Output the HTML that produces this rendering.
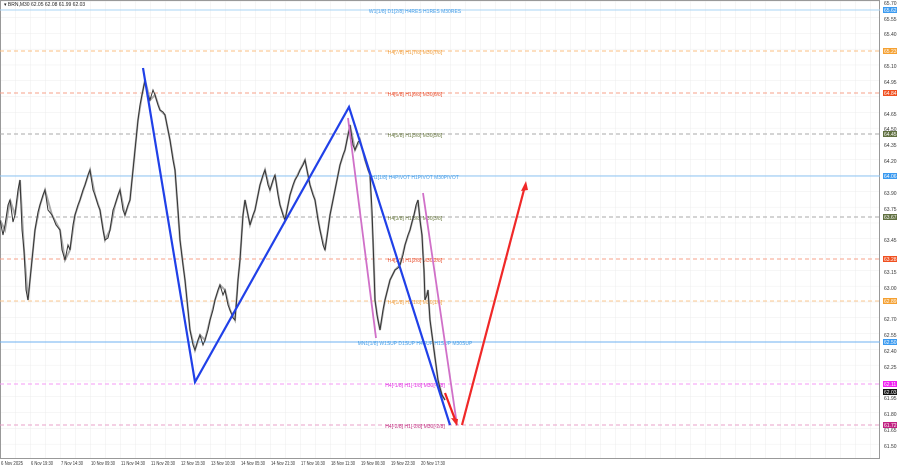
<!DOCTYPE html><html><head><style>
body{margin:0;width:900px;height:468px;background:#fff;overflow:hidden;font-family:"Liberation Sans",sans-serif}
svg{display:block}
</style></head><body>
<svg width="900" height="468" viewBox="0 0 900 468">
<defs>
<pattern id="g" width="15" height="15.8" patternUnits="userSpaceOnUse" x="1" y="2">
<path d="M15 0V15.8M0 15.8H15" stroke="#ececec" stroke-width="1" fill="none"/></pattern>
</defs>
<rect x="0" y="0" width="880" height="459" fill="url(#g)"/>
<rect x="0.5" y="0.5" width="879" height="458" fill="none" stroke="#999"/>
<g stroke-width="1" fill="none">
<line x1="0" y1="10" x2="880" y2="10" stroke="#aad4f5"/>
<line x1="0" y1="51" x2="880" y2="51" stroke="#fbbf80" stroke-dasharray="4,3"/>
<line x1="0" y1="93" x2="880" y2="93" stroke="#f7a08a" stroke-dasharray="4,3"/>
<line x1="0" y1="134" x2="880" y2="134" stroke="#aaa" stroke-dasharray="4,3"/>
<line x1="0" y1="176" x2="880" y2="176" stroke="#8cc4f4"/>
<line x1="0" y1="217" x2="880" y2="217" stroke="#aaa" stroke-dasharray="4,3"/>
<line x1="0" y1="259" x2="880" y2="259" stroke="#f7a08a" stroke-dasharray="4,3"/>
<line x1="0" y1="301" x2="880" y2="301" stroke="#fbc890" stroke-dasharray="4,3"/>
<line x1="0" y1="342" x2="880" y2="342" stroke="#6fb2f0"/>
<line x1="0" y1="384" x2="880" y2="384" stroke="#f59af5" stroke-dasharray="4,3"/>
<line x1="0" y1="425" x2="880" y2="425" stroke="#e8a0c8" stroke-dasharray="4,3"/>
</g>
<g font-size="5" text-anchor="middle">
<text x="415" y="13" fill="#4aa0e8">W1[1/8] D1[2/8] H4RES H1RES M30RES</text>
<text x="415" y="54" fill="#f0a040">H4[7/8] H1[7/8] M30[7/8]</text>
<text x="415" y="96" fill="#e85030">H4[6/8] H1[6/8] M30[6/8]</text>
<text x="415" y="137" fill="#6a7a40">H4[5/8] H1[5/8] M30[5/8]</text>
<text x="415" y="179" fill="#4aa0e8">H1[1/8] H4PIVOT H1PIVOT M30PIVOT</text>
<text x="415" y="220" fill="#6a7a40">H4[3/8] H1[3/8] M30[3/8]</text>
<text x="415" y="262" fill="#e85030">H4[2/8] H1[2/8] M30[2/8]</text>
<text x="415" y="304" fill="#f0a040">H4[1/8] H1[1/8] M30[1/8]</text>
<text x="415" y="345" fill="#4aa0e8">MN1[1/8] W1SUP D1SUP H4SUP H1SUP M30SUP</text>
<text x="415" y="387" fill="#e030e0">H4[-1/8] H1[-1/8] M30[-1/8]</text>
<text x="415" y="428" fill="#c03080">H4[-2/8] H1[-2/8] M30[-2/8]</text>
</g>
<polyline fill="none" stroke="#aaa" stroke-width="2" points="0,220 5,230 10,200 15,215 20,180 24,250 28,300 32,260 35,230 40,205 45,190 52,215 60,230 65,260 70,250 75,215 80,200 85,185 90,170 95,195 100,210 105,240 110,230 115,205 120,190 125,215 130,200 134,160 138,120 142,95 145,80 150,100 155,95 160,110 165,115 170,140 175,170 180,240 185,280 190,330 195,350 200,335 205,340 210,320 215,300 220,285 225,290 230,310 235,320 238,280 240,260 243,215 245,200 250,225 255,210 260,185 265,170 270,190 275,175 280,205 285,220 290,195 295,180 300,170 305,160 310,185 315,200 320,230 325,250 330,215 335,190 340,165 345,150 348,135 350,125 355,150 360,140 365,160 370,175 373,240 375,300 378,320 380,330 385,300 390,280 395,270 400,265 405,245 410,230 414,215 418,200 420,220 422,235 424,270 425,300 428,290 430,320 434,350 438,380 442,395 445,400"/>
<polyline fill="none" stroke="#333" stroke-width="1" points="0,220 3,235 5,225 8,205 10,200 13,222 15,215 18,190 20,180 22,230 24,250 26,290 28,300 30,280 32,260 34,240 35,230 38,212 40,205 43,195 45,190 48,210 52,215 56,225 60,230 62,250 65,260 68,245 70,250 73,225 75,215 78,205 80,200 83,190 85,185 88,175 90,170 93,190 95,195 98,205 100,210 103,230 105,240 108,238 110,230 113,210 115,205 118,195 120,190 123,210 125,215 128,205 130,200 132,180 134,160 136,140 138,120 140,105 142,95 144,85 145,80 148,95 150,100 153,90 155,95 158,105 160,110 163,112 165,115 168,130 170,140 173,160 175,170 178,210 180,240 183,265 185,280 188,310 190,330 193,345 195,350 198,340 200,335 203,345 205,340 208,330 210,320 213,310 215,300 218,290 220,285 223,295 225,290 228,305 230,310 233,318 235,320 237,295 238,280 239,270 240,260 242,230 243,215 245,200 248,215 250,225 253,215 255,210 258,195 260,185 263,175 265,170 268,185 270,190 273,180 275,175 278,195 280,205 283,215 285,220 288,205 290,195 293,185 295,180 298,175 300,170 303,165 305,160 308,175 310,185 313,195 315,200 318,220 320,230 323,245 325,250 328,230 330,215 333,200 335,190 338,175 340,165 343,155 345,150 347,140 348,135 350,125 353,145 355,150 358,142 360,140 363,152 365,160 368,170 370,175 372,210 373,240 374,270 375,300 377,315 378,320 380,330 383,310 385,300 388,288 390,280 393,274 395,270 398,268 400,265 403,255 405,245 408,235 410,230 412,222 414,215 416,205 418,200 419,210 420,220 421,228 422,235 423,255 424,270 425,300 427,295 428,290 429,305 430,320 432,335 434,350 436,365 438,380 440,388 442,395 445,400"/>
<g fill="none" stroke-width="2.2">
<polyline stroke="#2040e8" points="143,68 195,382 349,107 450,425"/>
<line x1="348" y1="118" x2="376" y2="338" stroke="#d070c8" stroke-width="1.8"/>
<line x1="423" y1="193" x2="457" y2="425" stroke="#d070c8" stroke-width="1.8"/>
<line x1="445" y1="393" x2="456" y2="422" stroke="#f02020"/>
<polyline stroke="#f02828" points="462,425 525,186"/>
</g>
<path d="M526,181 L521,191 L528,190 Z" fill="#f02828"/>
<path d="M457,426 L451,418 L458,419 Z" fill="#f02828"/>
<g font-size="5" fill="#333">
<text x="884" y="5">65.70</text><text x="884" y="21">65.55</text><text x="884" y="36">65.40</text>
<text x="884" y="68">65.10</text><text x="884" y="84">64.95</text><text x="884" y="116">64.65</text>
<text x="884" y="131">64.50</text><text x="884" y="147">64.35</text><text x="884" y="163">64.20</text>
<text x="884" y="195">63.90</text><text x="884" y="211">63.75</text><text x="884" y="242">63.45</text>
<text x="884" y="274">63.15</text><text x="884" y="290">63.00</text><text x="884" y="321">62.70</text>
<text x="884" y="337">62.55</text><text x="884" y="353">62.40</text><text x="884" y="369">62.25</text>
<text x="884" y="400">61.95</text><text x="884" y="416">61.80</text><text x="884" y="432">61.65</text>
<text x="884" y="448">61.50</text>
</g>
<g font-size="5" fill="#fff">
<rect x="883" y="7" width="14" height="6" fill="#3a9af0"/><text x="884" y="12">65.62</text>
<rect x="883" y="48" width="14" height="6" fill="#f5a030"/><text x="884" y="53">65.23</text>
<rect x="883" y="90" width="14" height="6" fill="#f05020"/><text x="884" y="95">64.84</text>
<rect x="883" y="131" width="14" height="6" fill="#607040"/><text x="884" y="136">64.45</text>
<rect x="883" y="173" width="14" height="6" fill="#3a9af0"/><text x="884" y="178">64.06</text>
<rect x="883" y="214" width="14" height="6" fill="#607040"/><text x="884" y="219">63.67</text>
<rect x="883" y="256" width="14" height="6" fill="#f05020"/><text x="884" y="261">63.28</text>
<rect x="883" y="298" width="14" height="6" fill="#f5a030"/><text x="884" y="303">62.89</text>
<rect x="883" y="339" width="14" height="6" fill="#3a9af0"/><text x="884" y="344">62.50</text>
<rect x="883" y="381" width="14" height="6" fill="#f020f0"/><text x="884" y="386">62.11</text>
<rect x="883" y="389" width="14" height="6" fill="#111"/><text x="884" y="394">62.03</text>
<rect x="883" y="422" width="14" height="6" fill="#c02080"/><text x="884" y="427">61.72</text>
</g>
<text x="4" y="6" font-size="5" fill="#222">▾ BRN,M30  62.05 62.08 61.99 62.03</text>
<g font-size="5" fill="#333">
<text x="1" y="465" textLength="22" lengthAdjust="spacingAndGlyphs">6 Nov 2025</text>
<text x="31" y="465" textLength="22" lengthAdjust="spacingAndGlyphs">6 Nov 19:30</text>
<text x="61" y="465" textLength="22" lengthAdjust="spacingAndGlyphs">7 Nov 14:30</text>
<text x="91" y="465" textLength="24" lengthAdjust="spacingAndGlyphs">10 Nov 09:30</text>
<text x="121" y="465" textLength="24" lengthAdjust="spacingAndGlyphs">11 Nov 04:30</text>
<text x="151" y="465" textLength="24" lengthAdjust="spacingAndGlyphs">11 Nov 20:30</text>
<text x="181" y="465" textLength="24" lengthAdjust="spacingAndGlyphs">12 Nov 15:30</text>
<text x="211" y="465" textLength="24" lengthAdjust="spacingAndGlyphs">13 Nov 10:30</text>
<text x="241" y="465" textLength="24" lengthAdjust="spacingAndGlyphs">14 Nov 05:30</text>
<text x="271" y="465" textLength="24" lengthAdjust="spacingAndGlyphs">14 Nov 21:30</text>
<text x="301" y="465" textLength="24" lengthAdjust="spacingAndGlyphs">17 Nov 16:30</text>
<text x="331" y="465" textLength="24" lengthAdjust="spacingAndGlyphs">18 Nov 11:30</text>
<text x="361" y="465" textLength="24" lengthAdjust="spacingAndGlyphs">19 Nov 06:30</text>
<text x="391" y="465" textLength="24" lengthAdjust="spacingAndGlyphs">19 Nov 22:30</text>
<text x="421" y="465" textLength="24" lengthAdjust="spacingAndGlyphs">20 Nov 17:30</text>
</g>
</svg>
</body></html>
